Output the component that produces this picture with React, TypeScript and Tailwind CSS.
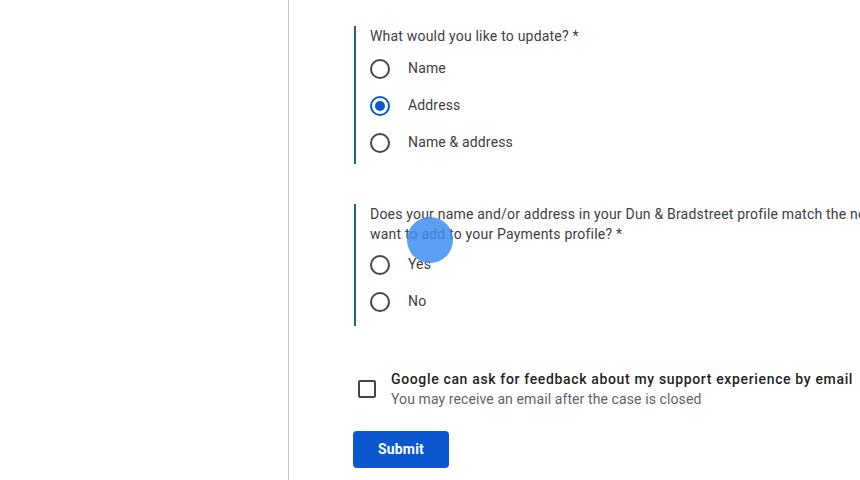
import React from 'react';

const Radio: React.FC<{ label: string; checked?: boolean }> = ({ label, checked = false }) => (
  <div className="flex items-center h-[37px]">
    <div className="w-[30px] flex justify-center">
      <span
        className={`w-[20px] h-[20px] rounded-full border-2 flex items-center justify-center ${
          checked ? 'border-[#0b57d0]' : 'border-[#444746]'
        }`}
      >
        {checked && <span className="w-[10px] h-[10px] rounded-full bg-[#0b57d0]" />}
      </span>
    </div>
    <span className="ml-[13px] text-[14px] text-[#3c4043] tracking-[0.15px]">{label}</span>
  </div>
);

export default function App() {
  return (
    <div className="relative w-[860px] h-[480px] overflow-hidden bg-white flex font-['Roboto',sans-serif]">
      <div className="w-[289px] shrink-0 border-r border-[#c6c6c6]" />
      <div className="pl-[65px] flex flex-col">
        <div className="mt-[26px] border-l-2 border-[#255c94] pl-[14px] pb-[3px]">
          <div className="text-[14px] leading-[20px] text-[#3c4043] whitespace-nowrap tracking-[0.2px]">
            What would you like to update? *
          </div>
          <div className="mt-[4px] -ml-[5px]">
            <Radio label="Name" />
            <Radio label="Address" checked />
            <Radio label="Name & address" />
          </div>
        </div>

        <div className="mt-[40px] border-l-2 border-[#255c94] pl-[14px] pb-[6px]">
          <div className="text-[14px] leading-[20px] text-[#3c4043] whitespace-nowrap tracking-[0.2px]">
            <div>Does your name and/or address in your Dun &amp; Bradstreet profile match the new name and/or address you</div>
            <div>want to add to your Payments profile? *</div>
          </div>
          <div className="mt-[2px] -ml-[5px]">
            <Radio label="Yes" />
            <Radio label="No" />
          </div>
        </div>

        <div className="mt-[43px] flex items-center">
          <span className="ml-[4px] w-[18px] h-[18px] rounded-[2px] border-2 border-[#444746]" />
          <div className="ml-[15px] whitespace-nowrap">
            <div className="text-[14px] leading-[20px] font-medium text-[#1f1f1f] tracking-[0.65px]">
              Google can ask for feedback about my support experience by email
            </div>
            <div className="text-[14px] leading-[20px] text-[#5f6368] tracking-[0.1px]">
              You may receive an email after the case is closed
            </div>
          </div>
        </div>

        <button className="mt-[22px] -ml-[1px] w-[96px] h-[37px] rounded-[4px] bg-[#0b57d0] text-white text-[14px] font-bold tracking-[0.2px]">
          Submit
        </button>
      </div>

      <div className="absolute left-[407px] top-[217px] w-[46px] h-[46px] rounded-full bg-[#3d8ef0]/85 pointer-events-none" />
    </div>
  );
}
